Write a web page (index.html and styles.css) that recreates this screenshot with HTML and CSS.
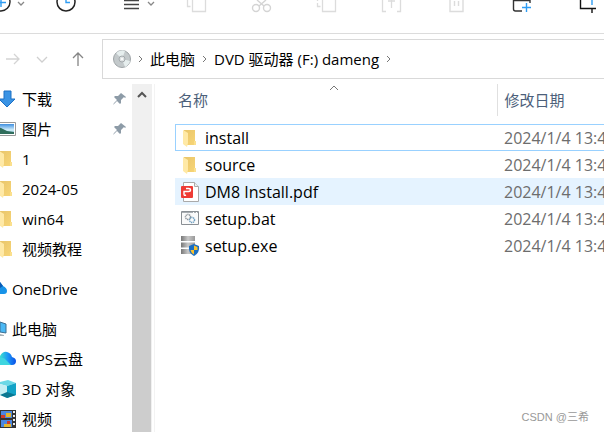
FILE: index.html
```html
<!DOCTYPE html>
<html lang="zh-CN">
<head>
    <meta charset="UTF-8">
    <meta name="viewport" content="width=device-width, initial-scale=1.0">
    <title>dameng</title>
    <link rel="stylesheet" href="styles.css">
</head>
<body>

<!-- shared shapes -->
<svg class="defs" aria-hidden="true">
    <defs>
        <linearGradient id="gold" x1="0" x2="1" y1="0" y2="1"><stop offset="0" stop-color="#e9c56a"/><stop offset="1" stop-color="#f8d677"/></linearGradient>
        <linearGradient id="cloud" x1="0" x2="1"><stop offset="0" stop-color="#3be0d0"/><stop offset=".5" stop-color="#1b95f5"/><stop offset="1" stop-color="#0a50e8"/></linearGradient>
        <linearGradient id="disk" x1="0" x2="1"><stop offset="0" stop-color="#777"/><stop offset=".5" stop-color="#c8c8c8"/><stop offset="1" stop-color="#999"/></linearGradient>
        <linearGradient id="sky" x1="0" x2="0" y1="0" y2="1"><stop offset="0" stop-color="#3f8fe0"/><stop offset=".6" stop-color="#d4f0fb"/><stop offset="1" stop-color="#6fb0c8"/></linearGradient>
    </defs>
    <symbol id="folder" viewBox="0 0 20 20">
        <path d="M4 2h11v11h1v4H4z" fill="url(#gold)"/>
        <path d="M14 13h2v4h-2z" fill="#fbe08e"/>
        <path d="M3 2l5 3v10l-1 4-4-3z" fill="#ffe9a6"/>
    </symbol>
    <symbol id="pin" viewBox="0 0 14 14">
        <path d="M8 1l5 4-1 1-1-1-3 3v3l-1 1-3-3-3 3-1 1 1-2 3-3-3-3 1-1 3 0 3-3-1-1z" fill="#8d9ba7"/>
    </symbol>
</svg>

<header class="toolbar">
    <button aria-label="新建"><svg width="65" height="14" viewBox="0 0 65 14" fill="none"><circle cx="33" cy="2" r="9" stroke="#222" stroke-width="1.4"/><path d="M33 0v7M28 2.500h10" stroke="#2e9cf3" stroke-width="1.4"/><path d="M50 2l3 3 3-3" stroke="#888" stroke-width="1.300"/></svg></button>
    <button aria-label="最近"><svg width="65" height="14" viewBox="0 0 65 14" fill="none"><circle cx="33" cy="2" r="9" stroke="#222" stroke-width="1.500"/><path d="M33 0v2.500h4" stroke="#2e9cf3" stroke-width="1.400"/></svg></button>
    <button aria-label="排序"><svg width="65" height="14" viewBox="0 0 65 14" fill="none"><path d="M26 .5h15M26 4.500h15M26 8.500h15" stroke="#444" stroke-width="1.400"/><path d="M50 2l3 3 3-3" stroke="#888" stroke-width="1.300"/></svg></button>
    <button aria-label="复制" disabled><svg width="65" height="14" viewBox="0 0 65 14" fill="none" stroke="#dcdcdc" stroke-width="1.300"><path d="M24.500 0v6.500h3M29.500 0v11.500h13V0"/></svg></button>
    <button aria-label="剪切" disabled><svg width="65" height="14" viewBox="0 0 65 14" fill="none" stroke="#d4d4d4" stroke-width="1.400"><circle cx="28" cy="8" r="3.500"/><circle cx="39" cy="8" r="3.500"/><path d="M29 0l7 6M38 0l-7 6"/></svg></button>
    <button aria-label="粘贴" disabled><svg width="65" height="14" viewBox="0 0 65 14" fill="none" stroke="#dcdcdc" stroke-width="1.300"><path d="M24.500 0v1M24.500 3v3.500h3M29.500 0v11.500h13V0"/></svg></button>
    <button aria-label="重命名" disabled><svg width="65" height="14" viewBox="0 0 65 14" fill="none" stroke="#dcdcdc" stroke-width="1.300"><path d="M28 11.500h-3.500V0M39 11.500h3.500V0M33.500 0v8M30 1h7"/></svg></button>
    <button aria-label="删除" disabled><svg width="65" height="14" viewBox="0 0 65 14" fill="none" stroke="#dcdcdc" stroke-width="1.400"><path d="M27 0v11.500h13V0M31.500 1v5M35.500 1v5"/></svg></button>
    <button aria-label="新建文件夹"><svg width="65" height="14" viewBox="0 0 65 14" fill="none"><path d="M25.500 0v9q0 2 2 2H34M25 .5h17V3" stroke="#333" stroke-width="1.400"/><path d="M38.500 3v9M34 7.500h9" stroke="#2e9cf3" stroke-width="1.400"/></svg></button>
    <button aria-label="裁剪"><svg width="65" height="14" viewBox="0 0 65 14" fill="none"><path d="M27.500 0v8.500H43M39 9v4" stroke="#111" stroke-width="1.400"/><path d="M39 0v5" stroke="#2e9cf3" stroke-width="1.400"/></svg></button>
</header>

<div class="address-row">
    <div class="history">
        <button aria-label="前进" disabled><svg width="14" height="14" viewBox="0 0 14 14" fill="none" stroke="#d4d4d4" stroke-width="1.300"><path d="M0 7h13M8 2l5 5-5 5"/></svg></button>
        <button aria-label="历史"><svg width="12" height="14" viewBox="0 0 12 14" fill="none" stroke="#cfcfcf" stroke-width="1.300"><path d="M1 5l5 5 5-5"/></svg></button>
        <button aria-label="向上"><svg width="12" height="14" viewBox="0 0 12 14" fill="none" stroke="#858585" stroke-width="1.300"><path d="M6 14V1M1 6l5-5 5 5"/></svg></button>
    </div>
    <nav class="address">
        <svg width="18" height="18" viewBox="0 0 18 18"><circle cx="9" cy="9" r="8.500" fill="#c3c9cb" stroke="#9ea4a7"/><path d="M9 9L3 3q5-4 9-2zM9 9l3 8q4-2 5-6z" fill="#e6eeee"/><circle cx="9" cy="9" r="3" fill="#dfe3e4" stroke="#a4aaad"/><circle cx="9" cy="9" r="1" fill="#fff"/></svg>
        <svg class="sep" width="5" height="8" viewBox="0 0 5 8"><path d="M1 1l3 3-3 3"/></svg>
        <a href="#">此电脑</a>
        <svg class="sep" width="5" height="8" viewBox="0 0 5 8"><path d="M1 1l3 3-3 3"/></svg>
        <a href="#">DVD 驱动器 (F:) dameng</a>
        <svg class="sep" width="5" height="8" viewBox="0 0 5 8"><path d="M1 1l3 3-3 3"/></svg>
    </nav>
</div>

<div class="content">
    <nav class="sidebar">
        <ul>
            <li><a href="#"><svg width="16" height="20" viewBox="4 0 16 20"><path d="M8 2h7v8h4l-8 8-8-8h5z" fill="#3a93e4" stroke="#1d70c4"/></svg>下载</a><svg class="pin" width="14" height="14"><use href="#pin"/></svg></li>
            <li><a href="#"><svg width="16" height="20" viewBox="4 0 16 20"><path d="M0 3.500h19.500v13H0z" fill="#fff" stroke="#999"/><path d="M0 5h18v10H0z" fill="url(#sky)"/><path d="M0 8l5 1 6 3 7 1v2H0z" fill="#2f6d5c"/></svg>图片</a><svg class="pin" width="14" height="14"><use href="#pin"/></svg></li>
            <li><a href="#"><svg width="16" height="20" viewBox="4 0 16 20"><use href="#folder" width="20" height="20"/></svg>1</a></li>
            <li><a href="#"><svg width="16" height="20" viewBox="4 0 16 20"><use href="#folder" width="20" height="20"/></svg>2024-05</a></li>
            <li><a href="#"><svg width="16" height="20" viewBox="4 0 16 20"><use href="#folder" width="20" height="20"/></svg>win64</a></li>
            <li><a href="#"><svg width="16" height="20" viewBox="4 0 16 20"><use href="#folder" width="20" height="20"/></svg>视频教程</a></li>
        </ul>
        <ul>
            <li class="root"><a href="#"><svg width="7" height="20" viewBox="0 0 7 20"><path d="M0 3l3 4q4 2 4 5 0 3-3 3H0z" fill="#1793e8"/><path d="M0 3l3 4-3 2z" fill="#0a5bb5"/></svg>OneDrive</a></li>
        </ul>
        <ul>
            <li class="root"><a href="#"><svg width="7" height="20" viewBox="0 0 7 20"><path d="M0 3l6 2v9l-6-1z" fill="#4bb8f4" stroke="#3c6f92"/><path d="M0 15l4 1v1H0z" fill="#a7b0b5"/></svg>此电脑</a></li>
            <li><a href="#"><svg width="16" height="20" viewBox="0 0 16 20"><path d="M0 7q3-5 7-4 4 1 5 5 4 1 4 4 0 4-4 4H0z" fill="url(#cloud)"/><path d="M0 9q4-1 7 3l4 4H0z" fill="#3fd5df"/></svg>WPS云盘</a></li>
            <li><a href="#"><svg width="16" height="20" viewBox="0 0 16 20"><path d="M0 3l8-2 8 3-9 3-7-2z" fill="#6bd8e6"/><path d="M0 5l7 2v12l-7-3z" fill="#c5eef3"/><path d="M7 7l9-3v12l-9 3z" fill="#14a3c7"/><path d="M7 13l9 3-9 3-7-3z" fill="#0b7791"/></svg>3D 对象</a></li>
            <li><a href="#"><svg width="16" height="20" viewBox="0 0 16 20"><path d="M0 1h16v18H0z" fill="#333"/><path d="M1 2h11v7H1zM1 11h11v7H1z" fill="#4b86df"/><path d="M6 4h5v4H6z" fill="#e4b62d"/><path d="M1 6h4v3H1zM7 12h3v3H7z" fill="#cf3b29"/><path d="M4 15h7v3H4z" fill="#e4b62d"/><path d="M14 2v16" stroke="#eee" stroke-width="2" stroke-dasharray="2 2"/></svg>视频</a></li>
        </ul>
    </nav>
    <div class="scrollbar">
        <button aria-label="向上滚动"><svg width="10" height="8" viewBox="0 0 10 8" fill="none" stroke="#555" stroke-width="2"><path d="M1 6l4-4 4 4"/></svg></button>
        <div class="thumb"></div>
    </div>

    <main class="files">
        <table>
            <thead>
                <tr>
                    <th class="name"><div class="head">名称<svg class="sort" width="10" height="6" viewBox="0 0 10 6" fill="none" stroke="#777"><path d="M1 5l4-4 4 4"/></svg></div></th>
                    <th>修改日期</th>
                </tr>
            </thead>
            <tbody>
                <tr class="focused">
                    <td><a href="#"><svg width="20" height="20"><use href="#folder"/></svg>install</a></td>
                    <td>2024/1/4 13:4</td>
                </tr>
                <tr>
                    <td><a href="#"><svg width="20" height="20"><use href="#folder"/></svg>source</a></td>
                    <td>2024/1/4 13:4</td>
                </tr>
                <tr class="hovered">
                    <td><a href="#"><svg width="20" height="20" viewBox="0 0 20 20"><path d="M3.500.5h11l4 4v15h-15z" fill="#fff" stroke="#aaa"/><path d="M14.500.5v4h4" fill="#eee" stroke="#aaa"/><rect x="1" y="4" width="12" height="12" rx="1" fill="#ee3b35"/><path d="M4 12v-2.500h4.500q2 0 2-1.500t-2-1.500H6M4 12q0 2 2 1" fill="none" stroke="#fff" stroke-width="1.400"/></svg>DM8 Install.pdf</a></td>
                    <td>2024/1/4 13:4</td>
                </tr>
                <tr>
                    <td><a href="#"><svg width="20" height="20" viewBox="0 0 20 20" fill="none"><path d="M1.500 2.500h17v13h-17z" fill="#fafafa" stroke="#8a8f94"/><path d="M2 3.500h16" stroke="#a8adb2"/><path d="M13 3.500h1M16 3.500h1" stroke="#fff"/><circle cx="8" cy="8" r="2.500" stroke="#8b9197" stroke-width="1.500" stroke-dasharray="1.200 .6"/><circle cx="12" cy="11" r="2.500" stroke="#6d9ec0" stroke-width="1.500" stroke-dasharray="1.200 .6"/></svg>setup.bat</a></td>
                    <td>2024/1/4 13:4</td>
                </tr>
                <tr>
                    <td><a href="#"><svg width="20" height="20" viewBox="0 0 20 20"><path d="M1 0h14v5H1zM1 6.500h14v5H1zM1 13h14v5H1z" fill="url(#disk)"/><path d="M14 8l5 2q1 7-5 10-6-3-5-10z" fill="#1b6fc2"/><path d="M14 9.500l3.500 1.500v3H14zM14 14v4.500q-3-1.500-3.500-4.500z" fill="#fbc12d"/></svg>setup.exe</a></td>
                    <td>2024/1/4 13:4</td>
                </tr>
            </tbody>
        </table>
    </main>
</div>

<div class="watermark">CSDN @三希</div>

</body>
</html>
```
FILE: styles.css
```css
* {
    box-sizing: border-box;
}
body {
    display: flex;
    flex-direction: column;
    height: 100vh;
    margin: 0;
    overflow: hidden;
    background-color: #fff;
    color: #000;
    font-family: "Open Sans", "Noto Sans CJK SC", sans-serif;
    font-size: 15px;
    line-height: 20px;
}
.defs {
    position: absolute;
    width: 0;
    height: 0;
}
svg {
    display: block;
    flex: none;
}
a {
    color: inherit;
    text-decoration: none;
}
button {
    padding: 0;
    border: none;
    background: none;
}

/* toolbar */
.toolbar {
    display: flex;
    flex: none;
    align-items: flex-start;
    height: 34px;
    margin-left: -32px;
    border-bottom: 1px solid #dcdcdc;
}

/* address bar */
.address-row {
    display: flex;
    flex: none;
    height: 40px;
    margin-top: 5px;
}
.history {
    display: flex;
    flex: none;
    align-items: center;
    gap: 16px;
    width: 102px;
    padding-left: 6px;
}
.history button:last-child {
    margin-left: 8px;
}
.address {
    display: flex;
    flex: 1;
    align-items: center;
    gap: 7px;
    padding-left: 10px;
    border: 1px solid #d9d9d9;
    border-right: none;
    white-space: nowrap;
}
.sep {
    fill: none;
    stroke: #777;
}

/* main area */
.content {
    display: flex;
    flex: 1;
    min-height: 0;
    padding-top: 5px;
}
.sidebar {
    flex: none;
    width: 132px;
    overflow: hidden;
}
.sidebar ul {
    margin: 0 0 10px;
    padding: 0;
    list-style: none;
}
.sidebar li {
    display: flex;
    align-items: center;
    justify-content: space-between;
    height: 30px;
    padding-right: 5px;
}
.sidebar a {
    display: flex;
    align-items: center;
    gap: 6px;
    white-space: nowrap;
}
.sidebar .root a {
    gap: 5px;
}
.scrollbar {
    display: flex;
    flex: none;
    flex-direction: column;
    width: 20px;
    background-color: #f0f0f0;
}
.scrollbar button {
    display: flex;
    justify-content: center;
    height: 96px;
    padding-top: 7px;
}
.thumb {
    flex: 1;
    width: 19px;
    background-color: #cdcdcd;
}
.files {
    flex: 1;
    min-width: 0;
    margin-right: -2px;
    margin-left: 2px;
    padding-left: 20px;
    border-left: 1px solid #f3f3f3;
    overflow: hidden;
}
table {
    width: 100%;
    border-collapse: collapse;
    table-layout: fixed;
}
th {
    height: 32px;
    padding: 0 0 0 7px;
    color: #4c607a;
    font-weight: normal;
    text-align: left;
    white-space: nowrap;
}
th.name {
    width: 322px;
    padding-left: 3px;
    border-right: 1px solid #e0e0e0;
}
.head {
    position: relative;
}
.sort {
    position: absolute;
    top: -5px;
    left: 151px;
}
thead::after {
    content: "";
    display: block;
    height: 8px;
}
td {
    height: 27px;
    padding: 0 0 0 7px;
    color: #6d6d6d;
    font-size: 16px;
    white-space: nowrap;
}
td:first-child {
    padding-left: 5px;
    color: #000;
}
td a {
    display: flex;
    align-items: center;
    gap: 5px;
}
.focused {
    outline: 1px solid #99d1ff;
    outline-offset: -1px;
}
.hovered {
    background-color: #e5f3ff;
}

.watermark {
    position: absolute;
    right: 15px;
    bottom: 5px;
    color: #999;
    font-family: "Liberation Sans", "Noto Sans CJK SC", sans-serif;
    font-size: 11px;
}
```
